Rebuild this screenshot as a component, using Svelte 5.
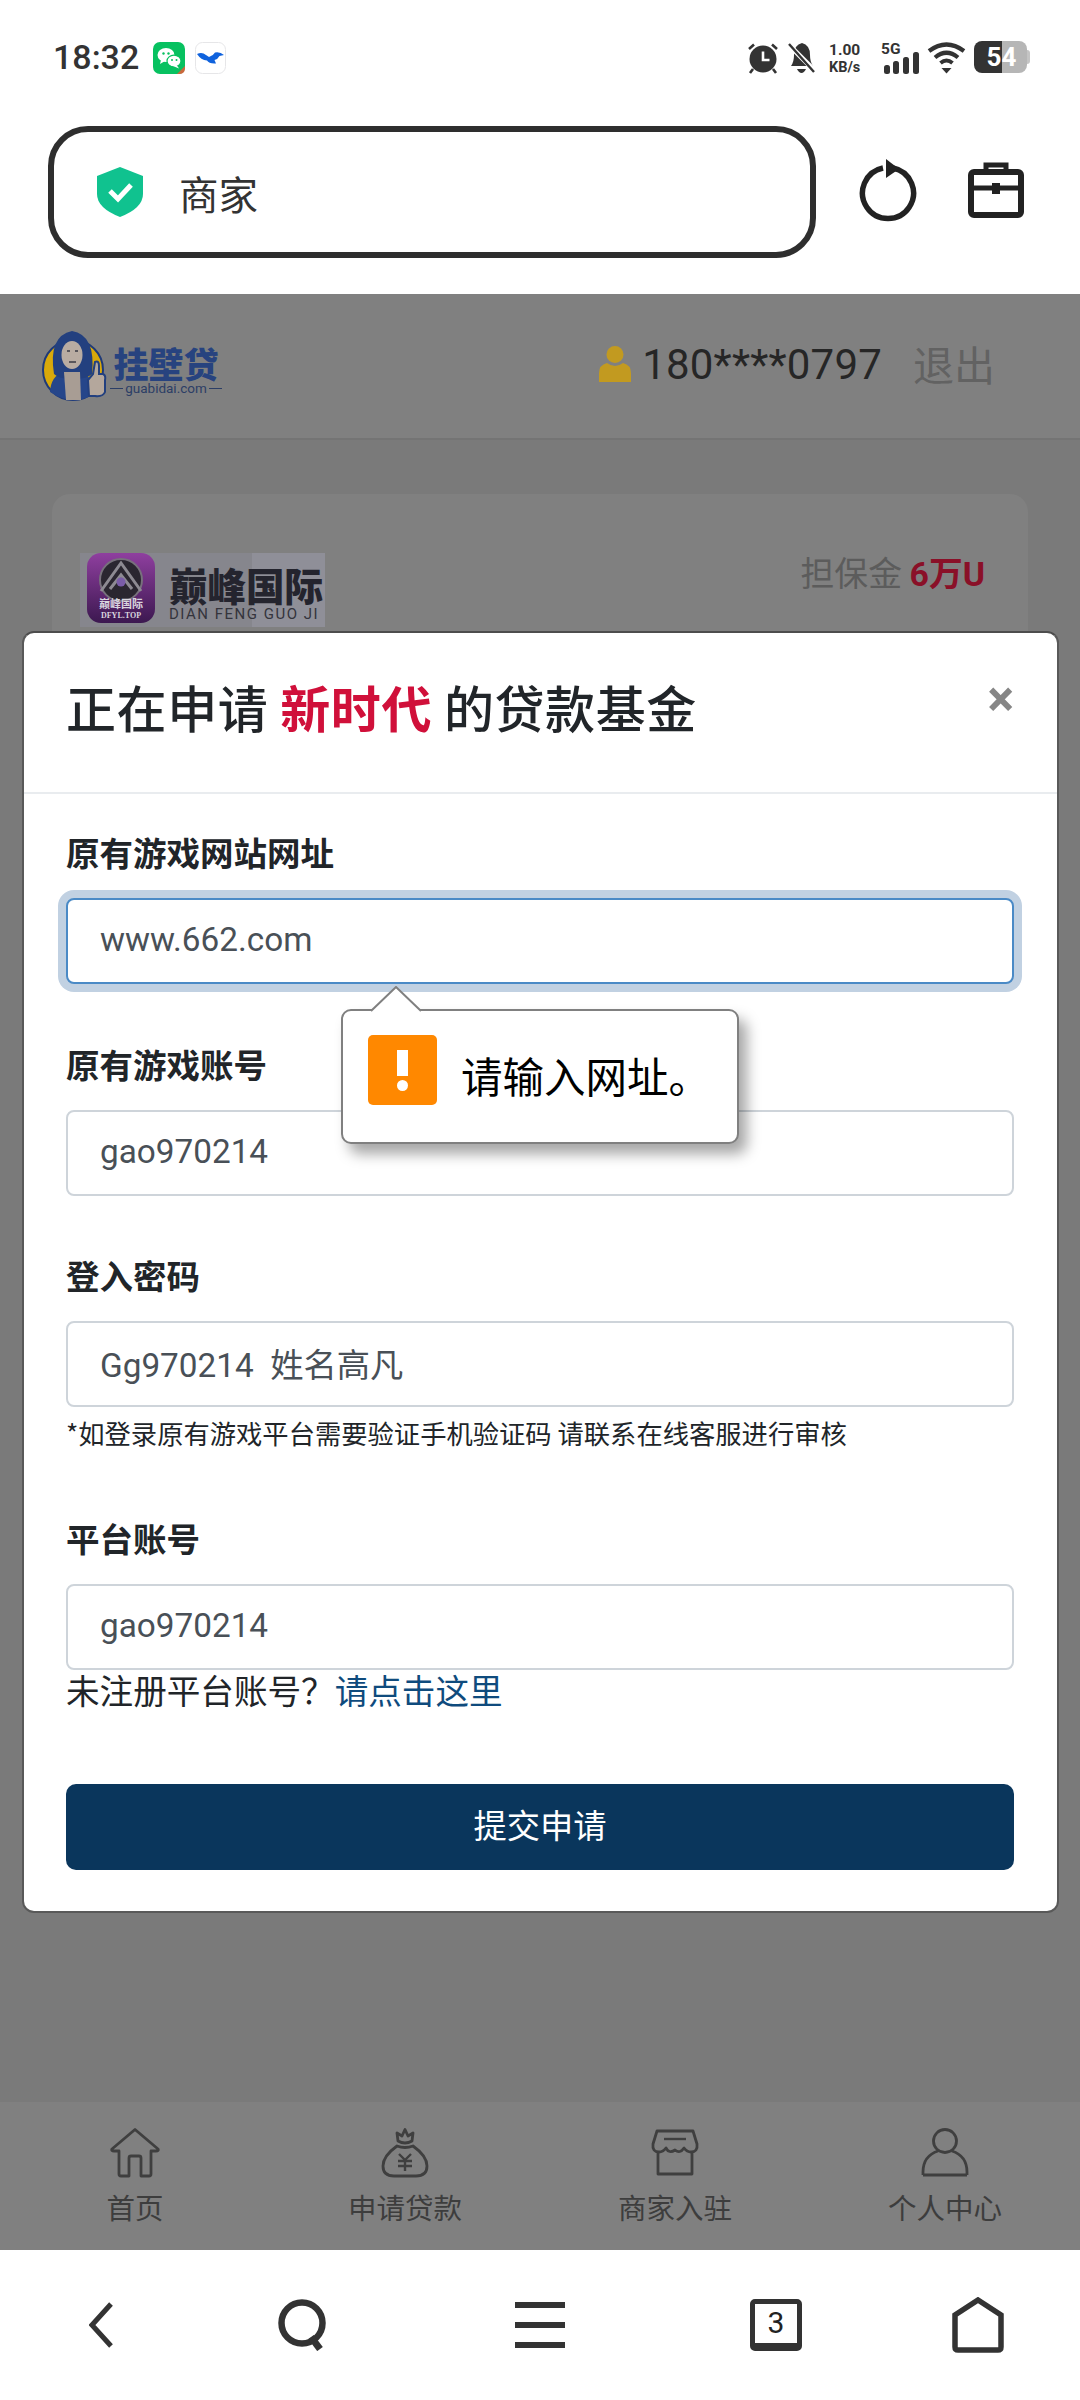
<script>
  const fields = [
    { label: '原有游戏网站网址', value: 'www.662.com', focus: true },
    { label: '原有游戏账号', value: 'gao970214' },
    { label: '登入密码', value: 'Gg970214  姓名高凡', help: '*如登录原有游戏平台需要验证手机验证码 请联系在线客服进行审核' },
    { label: '平台账号', value: 'gao970214', reg: true }
  ];
</script>

<div class="phone">
  <header class="status">
    <span class="time">18:32</span>
    <svg class="appicon" viewBox="0 0 32 32" width="32" height="32">
      <rect width="32" height="32" rx="7" fill="#07c160"/>
      <path d="M24 32 L32 24 V26 Q32 32 26 32 Z" fill="#c9683c"/>
      <ellipse cx="13" cy="13" rx="8.5" ry="7" fill="#fff"/>
      <path d="M8 18 L7 22 L12 19 Z" fill="#fff"/>
      <ellipse cx="21" cy="19" rx="7" ry="5.8" fill="#fff" stroke="#07c160" stroke-width="1.2"/>
      <path d="M24 23.5 L26 26.5 L20 24 Z" fill="#fff"/>
      <circle cx="10.5" cy="11.5" r="1.2" fill="#07c160"/><circle cx="15.5" cy="11.5" r="1.2" fill="#07c160"/>
      <circle cx="19" cy="18" r="1" fill="#07c160"/><circle cx="23.5" cy="18" r="1" fill="#07c160"/>
    </svg>
    <svg class="appicon second" viewBox="0 0 31 32" width="31" height="32">
      <rect x=".5" y=".5" width="30" height="31" rx="7" fill="#fff" stroke="#e6e6e8"/>
      <path d="M2 12 Q7 9.500 11 13 L14 15 Q18 14 20 10.500 Q25 9.500 29 13 L24.500 14 Q23 17 19.500 18 L21 21.500 Q14 22 12 18.500 Q6 18 2 12 Z" fill="#0f62dd"/>
    </svg>
    <div class="sys">
      <svg viewBox="0 0 32 32" width="32" height="32">
        <circle cx="16" cy="17" r="13.5" fill="#333"/>
        <path d="M16 9.5 V18 H22.5" fill="none" stroke="#fff" stroke-width="2.6"/>
        <path d="M2 7 L7 2.5 M30 7 L25 2.5 M6 27 L3 31 M26 27 L29 31" stroke="#333" stroke-width="2.6"/>
      </svg>
      <svg class="bell" viewBox="0 0 27 32" width="27" height="32">
        <path d="M3 24 Q6 20 6 13 Q6 3 14 1 Q22 3 22 13 Q22 20 25 24 Z" fill="#333"/>
        <path d="M9 27 H18 Q16 31 13.500 31 Q11 31 9 27 Z" fill="#333"/>
        <path d="M2 4 L26 28" stroke="#fff" stroke-width="5"/>
        <path d="M1 2 L26 30" stroke="#333" stroke-width="2.4"/>
      </svg>
      <div class="speed"><span>1.00</span><span class="unit">KB/s</span></div>
      <div class="net">
        <span>5G</span>
        <svg viewBox="0 0 37 22" width="37" height="22">
          <rect x="2" y="13" width="6" height="9" rx="2.500" fill="#333"/>
          <rect x="11" y="9" width="6" height="13" rx="2.500" fill="#333"/>
          <rect x="21" y="5" width="6" height="17" rx="2.500" fill="#333"/>
          <rect x="31" y="0" width="6" height="22" rx="2.500" fill="#333"/>
        </svg>
      </div>
      <svg class="wifi" viewBox="0 0 39 32" width="39" height="32">
        <path d="M2 9 Q19.500 -4 37 9" fill="none" stroke="#333" stroke-width="4.200"/>
        <path d="M8 15.500 Q19.500 6 31 15.500" fill="none" stroke="#333" stroke-width="4.200"/>
        <path d="M13.500 21 Q19.500 16 25.500 21" fill="none" stroke="#333" stroke-width="4"/>
        <path d="M14.500 26 H24.500 L19.500 31.500 Z" fill="#333"/>
      </svg>
      <div class="battery"><span>54</span></div>
    </div>
  </header>

  <div class="address">
    <div class="urlbox">
      <svg viewBox="0 0 46 50" width="46" height="50">
        <path d="M23 0 L46 9 V27 Q46 41 23 50 Q0 41 0 27 V9 Z" fill="#10c28f"/>
        <path d="M13 24 L21 32 L34 18" fill="none" stroke="#fff" stroke-width="5"/>
      </svg>
      <span>商家</span>
    </div>
    <svg class="refresh" viewBox="0 0 60 64" width="60" height="64">
      <path d="M24 10 A25.500 25.500 0 1 0 34 10" fill="none" stroke="#222" stroke-width="5.500"/>
      <path d="M27 1 L40 11 L27 20 Z" fill="#222"/>
    </svg>
    <svg class="case" viewBox="0 0 56 56" width="56" height="56">
      <path d="M18 10 V3 H38 V10" fill="none" stroke="#222" stroke-width="5"/>
      <rect x="3" y="10" width="50" height="43" rx="3" fill="none" stroke="#222" stroke-width="6"/>
      <path d="M3 26 H53" stroke="#222" stroke-width="5"/>
      <rect x="24" y="21" width="8" height="11" fill="#222"/>
    </svg>
  </div>

  <main class="page">
    <div class="topbar">
      <div class="logo">
        <svg viewBox="0 0 66 72" width="66" height="72">
          <circle cx="32" cy="40" r="30" fill="#d9a90a" stroke="#1f3a78" stroke-width="2"/>
          <path d="M9 62 Q10 46 22 42 H42 Q52 46 50 66 Q30 76 9 62 Z" fill="#26468a"/>
          <path d="M13 44 Q7 6 31 1 Q55 5 51 44 Q44 50 32 48 Q20 50 13 44 Z" fill="#23407f"/>
          <path d="M23 42 H39 L40 70 H25 Z" fill="#a89d94"/>
          <ellipse cx="31" cy="25" rx="10.500" ry="14" fill="#b9aca2"/>
          <path d="M26 21 H29 M34 21 H37 M28 32 H35" stroke="#3a3a44" stroke-width="1.500"/>
          <path d="M47 50 L52 44 L54 32 Q58 30 58 36 L58 44 H62 Q65 45 64 50 V62 Q62 67 54 66 H48 Z" fill="#b4a79c" stroke="#23407f" stroke-width="2"/>
        </svg>
        <div class="logotext">
          <strong>挂壁贷</strong>
          <small>guabidai.com</small>
        </div>
      </div>
      <div class="user">
        <svg viewBox="0 0 32 36" width="32" height="36">
          <circle cx="16" cy="8.500" r="8.500" fill="#c29a20"/>
          <path d="M0 36 V27 Q0 19 8 17 Q16 23 24 17 Q32 19 32 27 V36 Z" fill="#c29a20"/>
        </svg>
        <span class="phone-no">180****0797</span>
        <span class="logout">退出</span>
      </div>
    </div>

    <section class="card">
      <div class="brand">
        <svg class="brandicon" viewBox="0 0 68 70" width="68" height="70">
          <defs>
            <linearGradient id="pg" x1="0" y1="0" x2="0" y2="1">
              <stop offset="0" stop-color="#8f3f9f"/><stop offset="1" stop-color="#3c1850"/>
            </linearGradient>
          </defs>
          <rect width="68" height="70" rx="14" fill="url(#pg)"/>
          <circle cx="34" cy="27" r="21" fill="#2a2630" stroke="#77707c" stroke-width="2"/>
          <path d="M14 38 L34 10 L54 38 M23 36 L34 22 L45 36" fill="none" stroke="#8d8a92" stroke-width="3"/>
          <circle cx="34" cy="29" r="4.500" fill="#7a5ca8"/>
          <text x="34" y="55" class="icontext" text-anchor="middle">巅峰国际</text>
          <text x="34" y="65" class="icontext small" text-anchor="middle">DFYL.TOP</text>
        </svg>
        <div class="brandtext">
          <strong>巅峰国际</strong>
          <small>DIAN FENG GUO JI</small>
        </div>
      </div>
      <div class="deposit">担保金 <b>6万U</b></div>
    </section>

    <nav class="tabs">
      <div class="tab">
        <svg viewBox="0 0 50 50" width="50" height="50">
          <path d="M25 1.500 L2 21 Q1 23 4 23 H9 V46 Q9 48 11 48 H19 V30 Q19 28 21 28 H29 Q31 28 31 30 V48 H39 Q41 48 41 46 V23 H46 Q49 23 48 21 Z"/>
        </svg>
        <span>首页</span>
      </div>
      <div class="tab">
        <svg viewBox="0 0 50 50" width="50" height="50">
          <path d="M17 5 L22 8 L25 1.500 L28 8 L33 5 L32 13 Q25 17 18 13 Z"/>
          <path d="M17 18 Q3 28 3 38 Q3 48 14 48 H36 Q47 48 47 38 Q47 28 33 18 Q25 21 17 18 Z"/>
          <path d="M19 26 L25 32 L31 26 M25 32 V43 M18 33 H32 M18 38 H32" stroke-width="2.400"/>
        </svg>
        <span>申请贷款</span>
      </div>
      <div class="tab">
        <svg viewBox="0 0 50 50" width="50" height="50">
          <path d="M7 3 H43 L47 16 Q48 24 41 24 Q37 24 34 20 Q30 26 25 22 Q19 26 16 20 Q13 24 9 24 Q2 24 3 16 Z"/>
          <path d="M8 24 V46 H42 V24"/>
          <path d="M14 11 H36" stroke-width="2.400"/>
        </svg>
        <span>商家入驻</span>
      </div>
      <div class="tab">
        <svg viewBox="0 0 50 50" width="50" height="50">
          <circle cx="25" cy="13" r="11.500"/>
          <path d="M3 47 V44 Q3 28 18 23 M47 47 V44 Q47 28 32 23 M3 47 H47"/>
        </svg>
        <span>个人中心</span>
      </div>
    </nav>

    <div class="modal">
      <div class="modal-head">
        <h2>正在申请 <em>新时代</em> 的贷款基金</h2>
        <span class="close">×</span>
      </div>
      <form class="modal-body">
        {#each fields as f}
          <div class="group">
            <label for={f.label}>{f.label}</label>
            <input id={f.label} class:focus={f.focus} value={f.value} readonly />
            {#if f.help}<p class="help">{f.help}</p>{/if}
            {#if f.reg}<p class="reg">未注册平台账号？<a href="#reg">请点击这里</a></p>{/if}
          </div>
        {/each}
        <button type="button">提交申请</button>
      </form>

      <div class="bubble">
        <svg class="tip" viewBox="0 0 52 26" width="52" height="26">
          <path d="M1 25 L26 1 L51 25" fill="#fff" stroke="#808080" stroke-width="2"/>
        </svg>
        <span class="warn"><i></i><u></u></span>
        <span class="msg">请输入网址。</span>
      </div>
    </div>
  </main>

  <footer class="bottom">
    <svg viewBox="0 0 24 46" width="24" height="46"><path d="M22 2 L3 23 L22 44" fill="none" stroke="#333" stroke-width="5"/></svg>
    <svg viewBox="0 0 50 52" width="50" height="52">
      <circle cx="24" cy="24" r="20.500" fill="none" stroke="#333" stroke-width="6.500"/>
      <path d="M33 38 L42 50" stroke="#333" stroke-width="7"/>
    </svg>
    <svg viewBox="0 0 50 46" width="50" height="46"><path d="M0 3 H50 M0 23 H50 M0 43 H50" stroke="#333" stroke-width="6"/></svg>
    <div class="tabcount">3</div>
    <svg viewBox="0 0 52 56" width="52" height="56">
      <path d="M26 3 L49 18 V50 Q49 53 46 53 H6 Q3 53 3 50 V18 Z" fill="none" stroke="#333" stroke-width="5.500"/>
    </svg>
  </footer>
</div>

<style>
  :global(body) {
    margin: 0;
    background: #fff;
    font-family: Roboto, "Noto Sans CJK SC", sans-serif;
  }
  .phone {
    width: 1080px;
    height: 2400px;
    display: flex;
    flex-direction: column;
    overflow: hidden;
  }
  svg { display: block; flex: none; }

  .status {
    height: 114px;
    box-sizing: border-box;
    padding: 42px 53px 0 53px;
    display: flex;
    align-items: flex-start;
    color: #333;
  }
  .time {
    font-size: 34px;
    font-weight: 500;
    line-height: 30px;
    width: 100px;
  }
  .appicon.second { margin-left: 10px; }
  .sys {
    margin-left: auto;
    display: flex;
    align-items: flex-start;
  }
  .bell { margin-left: 9px; }
  .speed {
    margin-left: 14px;
    width: 37px;
    display: flex;
    flex-direction: column;
    font-size: 15.500px;
    font-weight: 700;
    line-height: 16px;
    gap: 2px;
    white-space: nowrap;
  }
  .speed .unit { font-size: 14.500px; }
  .net {
    margin-left: 15px;
    width: 37px;
    height: 32px;
    position: relative;
    font-size: 15.500px;
    font-weight: 700;
    line-height: 14px;
  }
  .net svg { position: absolute; left: 1px; top: 10px; }
  .wifi { margin-left: 9px; }
  .battery {
    margin-left: 8px;
    width: 53px;
    height: 32px;
    margin-top: -1px;
    border-radius: 8px;
    background: linear-gradient(90deg, #333 28px, #b6b6b6 28px);
    color: #fff;
    font-size: 26px;
    font-weight: 700;
    line-height: 32px;
    text-align: center;
    position: relative;
    box-sizing: border-box;
    padding-left: 2px;
  }
  .battery::after {
    content: '';
    position: absolute;
    right: -3px;
    top: 9px;
    width: 3px;
    height: 14px;
    background: #c4c4c4;
    border-radius: 0 3px 3px 0;
  }

  .address {
    height: 180px;
    box-sizing: border-box;
    padding: 12px 0 36px 48px;
    display: flex;
    align-items: center;
  }
  .urlbox {
    width: 768px;
    height: 132px;
    box-sizing: border-box;
    border: 6px solid #2e2e2e;
    border-radius: 40px;
    padding-left: 43px;
    display: flex;
    align-items: center;
    gap: 36px;
    font-size: 39.500px;
    color: #333;
    font-family: "Noto Sans CJK SC", sans-serif;
  }
  .refresh { margin-left: 43px; margin-top: -4px; }
  .case { margin-left: 49px; margin-top: -4px; }

  .page {
    position: relative;
    flex: 1;
    background: #7a7a7a;
    display: flex;
    flex-direction: column;
    overflow: hidden;
  }
  .topbar {
    height: 144px;
    background: #808080;
    border-bottom: 2px solid #747474;
    display: flex;
    align-items: center;
    padding: 0 85px 0 41px;
    box-sizing: content-box;
  }
  .logo { display: flex; align-items: flex-start; gap: 6px; }
  .logotext {
    display: flex;
    flex-direction: column;
    align-items: center;
    width: 106px;
    margin-top: 15px;
  }
  .logotext strong {
    font: 900 35px/36px "Noto Sans CJK SC", sans-serif;
    color: #27437f;
    white-space: nowrap;
  }
  .logotext small {
    font: 400 13.500px/14px Roboto, sans-serif;
    color: #2c3e66;
    white-space: nowrap;
    display: flex;
    align-items: center;
    gap: 2px;
  }
  .logotext small::before, .logotext small::after {
    content: '';
    width: 13px;
    height: 1px;
    background: #2c3e66;
  }
  .user { margin-left: auto; display: flex; align-items: center; margin-top: -4px; }
  .phone-no { font-size: 42px; color: #262626; margin-left: 11px; letter-spacing: 0.2px; }
  .logout {
    font: 400 41px/50px "Noto Sans CJK SC", sans-serif;
    color: #626262;
    margin: -2px 0 0 31px;
  }

  .card {
    margin: 54px 52px 0;
    height: 800px;
    background: #808080;
    border-radius: 18px;
    padding: 59px 43px 0 28px;
    box-sizing: border-box;
    display: flex;
    justify-content: space-between;
    align-items: flex-start;
    flex: none;
  }
  .brand {
    width: 245px;
    height: 74px;
    background: linear-gradient(90deg, #86868d 70%, #8f8f98 70%);
    display: flex;
    padding-left: 7px;
    box-sizing: border-box;
    gap: 14px;
  }
  .icontext { font: 700 11px "Noto Sans CJK SC", sans-serif; fill: #d8d4de; }
  .icontext.small { font: 700 8px "Liberation Serif", serif; }
  .brandtext { display: flex; flex-direction: column; width: 155px; }
  .brandtext strong {
    font: 900 38.500px/44px "Noto Sans CJK SC", sans-serif;
    color: #24242e;
    margin-top: 9px;
    white-space: nowrap;
  }
  .brandtext small {
    font: 400 15px/14px Roboto, sans-serif;
    letter-spacing: 1.500px;
    color: #34343c;
    margin-top: 1px;
    white-space: nowrap;
  }
  .deposit {
    font: 400 33.800px/46px "Noto Sans CJK SC", sans-serif;
    color: #5c5c5c;
    margin-top: -4px;
    white-space: pre;
  }
  .deposit b { color: #8a1028; font-weight: 700; font-family: Roboto, "Noto Sans CJK SC", sans-serif; }

  .tabs {
    margin-top: auto;
    height: 148px;
    background: #808080;
    display: grid;
    grid-template-columns: repeat(4, 270px);
    flex: none;
  }
  .tab {
    display: flex;
    flex-direction: column;
    align-items: center;
    padding-top: 26px;
    gap: 11px;
  }
  .tab svg { fill: none; stroke: #3f3f3f; stroke-width: 2.800; stroke-linejoin: round; }
  .tab span {
    font: 400 28.500px/36px "Noto Sans CJK SC", sans-serif;
    color: #3d3d3d;
  }

  .modal {
    position: absolute;
    left: 22px;
    top: 337px;
    width: 1037px;
    height: 1282px;
    box-sizing: border-box;
    background: #fff;
    border: 2px solid #595959;
    border-top-color: #4d4d4d;
    border-radius: 12px;
    font-family: Roboto, "Noto Sans CJK SC", sans-serif;
    color: #212529;
  }
  .modal-head {
    height: 161px;
    box-sizing: border-box;
    border-bottom: 2px solid #e9ecef;
    padding: 37px 43px 0 42px;
    position: relative;
  }
  h2 {
    margin: 0;
    font: 500 50px/72px "Noto Sans CJK SC", sans-serif;
    letter-spacing: 0.6px;
    color: #212529;
    white-space: pre;
  }
  h2 em { font-style: normal; font-weight: 700; color: #d0103a; }
  .close {
    position: absolute;
    right: 43px;
    top: 31px;
    font: 700 50px/70px Roboto, sans-serif;
    color: #868686;
  }
  .modal-body {
    padding: 36px 43px 0 42px;
    display: flex;
    flex-direction: column;
  }
  .group { display: flex; flex-direction: column; margin-bottom: 57.500px; }
  label {
    font: 700 33.500px/50px "Noto Sans CJK SC", sans-serif;
    color: #212529;
    margin: -3px 0 21px;
  }
  input {
    height: 86px;
    width: 100%;
    box-sizing: border-box;
    border: 2px solid #ced4da;
    border-radius: 8px;
    padding: 0 32px 3px;
    font: 400 33.300px Roboto, "Noto Sans CJK SC", sans-serif;
    color: #495057;
    background: #fff;
    outline: none;
  }
  input.focus {
    border-color: #4a8ac6;
    box-shadow: 0 0 0 8px #c1d1e2;
  }
  .help {
    margin: 8px 0 7px;
    font: 400 26.300px/36px "Noto Sans CJK SC", sans-serif;
    color: #212529;
  }
  .reg {
    margin: -5px 0 11.500px;
    font: 400 33.600px/50px "Noto Sans CJK SC", sans-serif;
    color: #212529;
  }
  .reg a { color: #0f4b7d; text-decoration: none; }
  button {
    height: 86px;
    border: none;
    border-radius: 10px;
    background: #0a365c;
    color: #fff;
    font: 400 33.300px "Noto Sans CJK SC", sans-serif;
    width: 100%;
    padding: 0 0 7px;
  }

  .bubble {
    position: absolute;
    left: 317px;
    top: 376px;
    width: 398px;
    height: 135px;
    box-sizing: border-box;
    background: #fff;
    border: 2px solid #808080;
    border-radius: 10px;
    box-shadow: 8px 10px 14px rgba(0, 0, 0, .35);
    display: flex;
    align-items: flex-start;
    padding: 24px 0 0 25px;
  }
  .tip { position: absolute; left: 27px; top: -25px; }
  .warn {
    width: 69px;
    height: 70px;
    border-radius: 5px;
    background: #ff8800;
    position: relative;
    flex: none;
  }
  .warn i {
    position: absolute;
    left: 29px;
    top: 15px;
    width: 11px;
    height: 26px;
    background: #fff;
  }
  .warn u {
    position: absolute;
    left: 29px;
    top: 45px;
    width: 11px;
    height: 11px;
    border-radius: 50%;
    background: #fff;
  }
  .msg {
    font: 400 41.500px/50px "Noto Sans CJK SC", sans-serif;
    color: #000;
    margin: 15px 0 0 24px;
    white-space: nowrap;
  }

  .bottom {
    height: 150px;
    background: #fff;
    display: grid;
    grid-template-columns: 202px 202px 272px 200px 204px;
    align-items: center;
    justify-items: center;
    flex: none;
  }
  .tabcount {
    width: 52px;
    height: 52px;
    box-sizing: border-box;
    border: 5px solid #333;
    border-bottom-width: 8px;
    border-radius: 5px;
    font: 400 30px/38px Roboto, sans-serif;
    color: #222;
    text-align: center;
  }
</style>
